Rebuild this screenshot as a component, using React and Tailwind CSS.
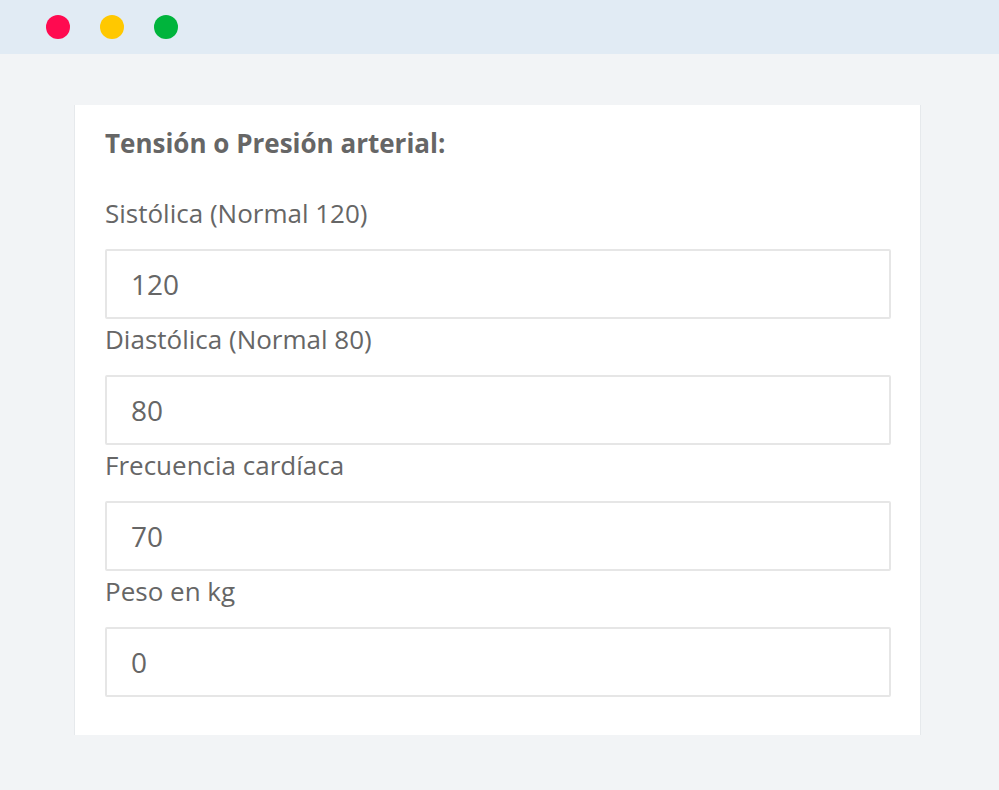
import React, { useState } from 'react';

const campos = [
  { id: 'sistolica', label: 'Sistólica (Normal 120)', valor: '120' },
  { id: 'diastolica', label: 'Diastólica (Normal 80)', valor: '80' },
  { id: 'frecuencia', label: 'Frecuencia cardíaca', valor: '70' },
  { id: 'peso', label: 'Peso en kg', valor: '0' },
];

export default function App() {
  const [valores, setValores] = useState(
    Object.fromEntries(campos.map((c) => [c.id, c.valor]))
  );

  return (
    <div
      className="min-h-screen bg-[#f2f4f6] text-[#666666]"
      style={{ fontFamily: '"Open Sans", "Noto Sans", sans-serif' }}
    >
      {/* barra de ventana */}
      <div className="h-[54px] bg-[#e1ebf4] flex items-center gap-[30px] pl-[46px]">
        <span className="w-6 h-6 rounded-full bg-[#ff0a50]" />
        <span className="w-6 h-6 rounded-full bg-[#ffc800]" />
        <span className="w-6 h-6 rounded-full bg-[#00b43c]" />
      </div>

      <div className="pt-[51px] pl-[74px]">
        <div className="w-[847px] bg-white border-x border-[#e6e9ec] pl-[30px] pr-[29px] pt-[18px] pb-[38px]">
          <h2 className="text-[26px] leading-[40px] font-bold mb-[30px]">Tensión o Presión arterial:</h2>

          {campos.map((c) => (
            <div key={c.id}>
              <label htmlFor={c.id} className="block text-[26px] leading-[40px] mb-4">
                {c.label}
              </label>
              <input
                id={c.id}
                type="text"
                value={valores[c.id]}
                onChange={(e) => setValores({ ...valores, [c.id]: e.target.value })}
                className="block w-full h-[70px] border-2 border-[#e6e6e6] rounded-[2px] px-[24px] text-[28px] text-[#666666] focus:outline-none"
              />
            </div>
          ))}
        </div>
      </div>
    </div>
  );
}
